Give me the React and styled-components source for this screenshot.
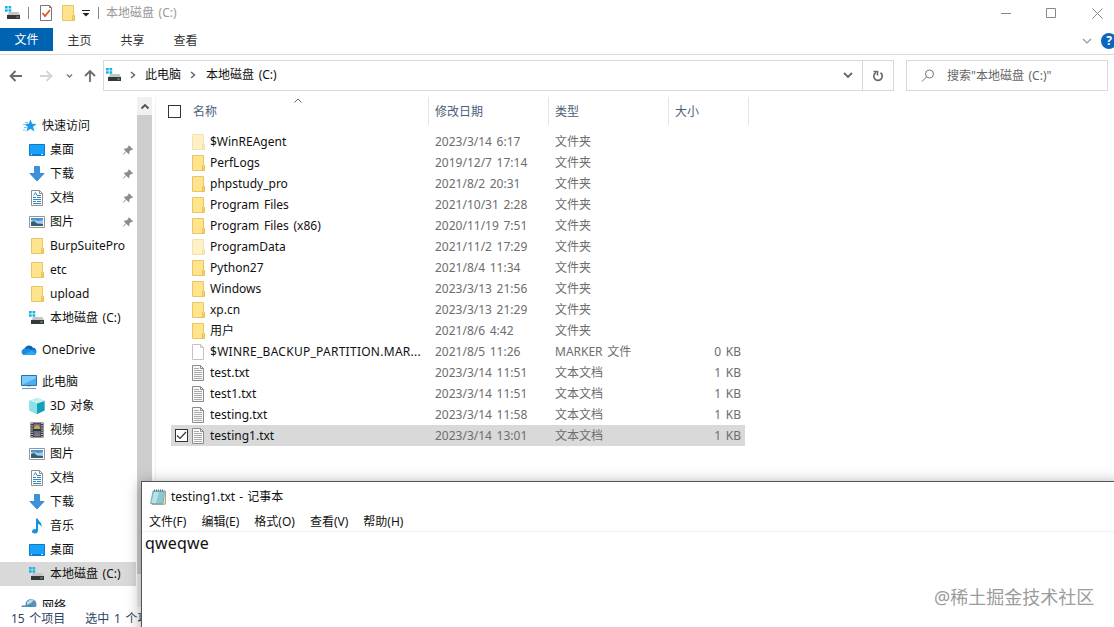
import React from 'react';
import styled, { createGlobalStyle } from "styled-components";

const sideItems = [
  { icon: 'star', text: '快速访问', top: true },
  { icon: 'desktop', text: '桌面', pin: true },
  { icon: 'down', text: '下载', pin: true },
  { icon: 'doc', text: '文档', pin: true },
  { icon: 'pic', text: '图片', pin: true },
  { icon: 'folder', text: 'BurpSuitePro' },
  { icon: 'folder', text: 'etc' },
  { icon: 'folder', text: 'upload' },
  { icon: 'drive', text: '本地磁盘 (C:)' },
  { icon: 'cloud', text: 'OneDrive', top: true, gap: true },
  { icon: 'pc', text: '此电脑', top: true, gap: true },
  { icon: 'cube', text: '3D 对象' },
  { icon: 'film', text: '视频' },
  { icon: 'pic', text: '图片' },
  { icon: 'doc', text: '文档' },
  { icon: 'down', text: '下载' },
  { icon: 'music', text: '音乐' },
  { icon: 'desktop', text: '桌面' },
  { icon: 'drive', text: '本地磁盘 (C:)', active: true },
  { icon: 'net', text: '网络', top: true, gap: true },
];

const files = [
  { icon: 'folder', faded: true, name: '$WinREAgent', date: '2023/3/14 6:17', type: '文件夹' },
  { icon: 'folder', name: 'PerfLogs', date: '2019/12/7 17:14', type: '文件夹' },
  { icon: 'folder', name: 'phpstudy_pro', date: '2021/8/2 20:31', type: '文件夹' },
  { icon: 'folder', name: 'Program Files', date: '2021/10/31 2:28', type: '文件夹' },
  { icon: 'folder', name: 'Program Files (x86)', date: '2020/11/19 7:51', type: '文件夹' },
  { icon: 'folder', faded: true, name: 'ProgramData', date: '2021/11/2 17:29', type: '文件夹' },
  { icon: 'folder', name: 'Python27', date: '2021/8/4 11:34', type: '文件夹' },
  { icon: 'folder', name: 'Windows', date: '2023/3/13 21:56', type: '文件夹' },
  { icon: 'folder', name: 'xp.cn', date: '2023/3/13 21:29', type: '文件夹' },
  { icon: 'folder', name: '用户', date: '2021/8/6 4:42', type: '文件夹' },
  { icon: 'blank', faded: true, wide: true, name: '$WINRE_BACKUP_PARTITION.MAR...', date: '2021/8/5 11:26', type: 'MARKER 文件', size: '0 KB' },
  { icon: 'text', name: 'test.txt', date: '2023/3/14 11:51', type: '文本文档', size: '1 KB' },
  { icon: 'text', name: 'test1.txt', date: '2023/3/14 11:51', type: '文本文档', size: '1 KB' },
  { icon: 'text', name: 'testing.txt', date: '2023/3/14 11:58', type: '文本文档', size: '1 KB' },
  { icon: 'text', name: 'testing1.txt', date: '2023/3/14 13:01', type: '文本文档', size: '1 KB', checked: true },
];

const shapes = {
  folder: (
    <>
      <path d="M2.500.5h11v9l1 1v5h-12z" fill="#ffe38d" stroke="#e9c665" />
      <path d="M12.500 15V10.500l1-1 1 1V15z" fill="#f9d466" stroke="#e6bd4c" strokeWidth=".8" />
    </>
  ),
  drive: (
    <>
      <path d="M0 1h2.700v2.500H0zM3.500 1h2.700v2.500H3.500zM0 4.300h2.700v2.500H0zM3.500 4.300h2.700v2.500H3.500z" fill="#19b2e8" />
      <path d="M4 7h9.500l1.500 3H2.500z" fill="#c4c6c8" />
      <path d="M2 10h13v4H2z" fill="#34383b" />
      <path d="M11.500 11.500h2v1h-2z" fill="#7ed6b1" />
    </>
  ),
  star: (
    <>
      <path d="M9.500 1.500l1.600 4.300 4.400.1-3.500 2.800 1.500 4.700-4.100-2.600-4 2.700 1.300-4.700-3.600-2.900 4.600-.1z" fill="#1d9bea" />
      <path d="M4 4.500h3M2 6.500h3M3 9.500h3M2 12h2.500" stroke="#7cc7f5" />
    </>
  ),
  desktop: (
    <>
      <path d="M.5 2.500h15v11H.5z" fill="#1aa1fa" stroke="#0e7bc9" />
      <path d="M1 12.500h14" stroke="#077ccc" />
      <path d="M2 12.500h1M12 12.500h2" stroke="#d5efff" />
    </>
  ),
  down: <path d="M5.500 0.500h5v7h4.500l-7 7.500L1 7.500h4.500z" fill="#3a92dc" stroke="#297dc4" strokeWidth=".8" />,
  doc: (
    <>
      <path d="M2.500.5h8l3 3v12h-11z" fill="#fcfdff" stroke="#8d9092" />
      <path d="M10.500.5v3h3" fill="none" stroke="#8d9092" />
      <path d="M4.500 5.500l2-3 1.500 3M8 5.500h4M4 7.500h3M8 7.500h4M4 9.500h8M4 11.500h3M8 11.500h4M4 13.500h8" fill="none" stroke="#3689bf" />
    </>
  ),
  pic: (
    <>
      <path d="M.5 2.500h15v11H.5z" fill="#fff" stroke="#939698" />
      <path d="M2 4h12v8H2z" fill="#9bcdf1" />
      <path d="M2 4h12v2l-4 1-8-1z" fill="#4e93d3" />
      <path d="M2 8l3-1 3 2.500 6 .5v2H2z" fill="#385e68" />
    </>
  ),
  cloud: (
    <>
      <path d="M3.500 13A3.400 3.400 0 0 1 3.500 6.500 4.800 4.800 0 0 1 12 5.700 3.800 3.800 0 0 1 13 13z" fill="#0c62b8" />
      <path d="M4 13a3 3 0 0 1-2-5.500l5-1.200 3 1.400 3-.5a3 3 0 0 1 0 5.800z" fill="#168edf" />
      <path d="M3 13l7-4.500 5 3q-.6 1.500-2 1.500z" fill="#30a9ee" />
    </>
  ),
  pc: (
    <>
      <path d="M.5 1.500h15v10H.5z" fill="#49aef4" stroke="#356f9f" />
      <path d="M1 2h14v2L1 11z" fill="#7acbff" />
      <path d="M6 12h4v1H6z" fill="#c5d4df" />
      <path d="M1 14.500h14" stroke="#6a98bb" />
    </>
  ),
  cube: (
    <>
      <path d="M8 0l7.500 3v9.500L8 16 .5 12.500V3z" fill="#49c3d4" />
      <path d="M.5 3L8 5.500V16L.5 12.500z" fill="#8be1e9" />
      <path d="M8 5.500L15.500 3v9.500L8 16z" fill="#159eb8" />
      <path d="M.5 3L8 0l7.500 3L8 5.500z" fill="#c4f2f4" />
    </>
  ),
  film: (
    <>
      <path d="M1.500.5h13v15h-13z" fill="#343638" />
      <path d="M4.500 1.500h7V7h-7z" fill="#78649d" />
      <path d="M4.500 9h7v5.500h-7z" fill="#4c73b0" />
      <path d="M5 5q3-4 6 0v2H5z" fill="#c3a549" />
      <path d="M5 13l3-2 3 2v1H5z" fill="#ab743a" />
      <path d="M3 1v14M13 1v14" stroke="#e9eaeb" strokeWidth="1.400" strokeDasharray="1 1.200" />
    </>
  ),
  music: <path d="M7 .5h1.800c.4 3 5 4 3.500 8.500-.5-2-1.800-2.700-3.300-3.100V13c0 3-6 3.600-6 .6 0-2 2-3 4-2.400z" fill="#1592e6" />,
  net: (
    <>
      <circle cx="10" cy="6.500" r="5.500" fill="#5692bd" />
      <path d="M6 4q4-4 7-2-2 3-7 5z" fill="#b8d9ea" />
      <path d="M1 8h9v5H1z" fill="#67b5e6" stroke="#3e789d" />
      <path d="M0 14.500h10" stroke="#94acbd" />
    </>
  ),
  blank: (
    <>
      <path d="M2.500.5h8l3 3v12h-11z" fill="#fff" stroke="#8b8b8b" />
      <path d="M10.500.5v3h3" fill="none" stroke="#8b8b8b" />
    </>
  ),
  text: (
    <>
      <path d="M2.500.5h8l3 3v12h-11z" fill="#f8f8f8" stroke="#8b8b8b" />
      <path d="M10.500.5v3h3" fill="none" stroke="#8b8b8b" />
      <path d="M4 3.500h5M4 5.500h8M4 7.500h8M4 9.500h8M4 11.500h8M4 13.500h8" stroke="#aaa" />
    </>
  ),
  check: (
    <>
      <path d="M2.500.5h9l2 2v13h-11z" fill="#fff" stroke="#777" />
      <path d="M11.500.5v2h2" fill="none" stroke="#777" />
      <path d="M4.500 8l2.500 3 5-6" fill="none" stroke="#e05a2b" strokeWidth="1.800" />
    </>
  ),
  pin: <path d="M8.500 3l4.500 4.500-1.200.4-.8-.2-2 2 .1 1.800-.9.9-2.500-2.500L2.500 13l-.5-.5 3.100-3.200L3 7.200l.9-.9 1.900.1 2-2-.2-.8z" fill="#858e96" />,
  notepad: (
    <>
      <path d="M3.500 2.500l12-.5v13l-2 .5H2z" fill="#e8dfc2" stroke="#9b9377" strokeWidth=".8" />
      <path d="M3 2h11.500L13 14.500H.5z" fill="#8ac8d3" stroke="#62a1af" strokeWidth=".7" />
      <path d="M4 3h5L6 14H1.500z" fill="#b8e2e6" />
      <path d="M4 1.500h10" stroke="#596e76" strokeWidth="2" strokeDasharray="1 1" />
    </>
  ),
};

const Icon = ({ name, faded }) => (
  <Glyph viewBox="0 0 16 16" $faded={faded}>{shapes[name]}</Glyph>
);

const Chevron = ({ d, color = '#666', w = 1.5 }) => (
  <Small viewBox="0 0 10 10">
    <path d={d} fill="none" stroke={color} strokeWidth={w} />
  </Small>
);

const RIGHT = 'M3 2l3.500 3L3 8';
const DOWN = 'M1 3l4 4 4-4';
const UP = 'M1.500 6.500L5 3l3.500 3.500';

function App() {
  return (
    <Screen>
      <Global />
      <TitleBar>
        <Icon name="drive" />
        <Bar />
        <Icon name="check" />
        <Icon name="folder" />
        <Small viewBox="0 0 10 10">
          <path d="M1 2.500h8" stroke="#222" />
          <path d="M1.500 5h7L5 8.500z" fill="#222" />
        </Small>
        <Bar />
        <Caption>本地磁盘 (C:)</Caption>
        <WinButtons viewBox="0 0 108 12">
          <path d="M5 6.500h10M50.500 1.500h9v9h-9zM96.500 1.500l10 10M106.500 1.500l-10 10" fill="none" stroke="#888" />
        </WinButtons>
      </TitleBar>

      <Tabs>
        <FileTab>文件</FileTab>
        <Tab>主页</Tab>
        <Tab>共享</Tab>
        <Tab>查看</Tab>
        <TabEnd>
          <Chevron d={DOWN} color="#999" w={1.2} />
          <Help>?</Help>
        </TabEnd>
      </Tabs>

      <NavBar>
        <NavArrows viewBox="0 0 98 20">
          <path d="M22 10H11M15.500 5L10.500 10l5 5" fill="none" stroke="#6b6b6b" strokeWidth="1.800" />
          <path d="M40 10h11M46.500 5l5 5-5 5" fill="none" stroke="#d4d4d4" strokeWidth="1.800" />
          <path d="M67 8.500l2.500 2.500L72 8.500" fill="none" stroke="#7a7a7a" strokeWidth="1.500" />
          <path d="M90 16V5M85 10l5-5 5 5" fill="none" stroke="#6b6b6b" strokeWidth="1.800" />
        </NavArrows>
        <Address>
          <Icon name="drive" />
          <Chevron d={RIGHT} />
          <span>此电脑</span>
          <Chevron d={RIGHT} />
          <span>本地磁盘 (C:)</span>
          <DropArrow><Chevron d={DOWN} w={1.8} /></DropArrow>
          <Refresh>
            <svg width="12" height="12" viewBox="0 0 12 12">
              <path d="M8.500 2.800A4.200 4.200 0 1 1 4 2.500" fill="none" stroke="#6b6b6b" strokeWidth="1.700" />
              <path d="M1.500 1.500h4V5.500" fill="none" stroke="#6b6b6b" strokeWidth="1.600" />
            </svg>
          </Refresh>
        </Address>
        <Search>
          <svg width="14" height="14" viewBox="0 0 14 14">
            <circle cx="8.500" cy="5" r="4" fill="none" stroke="#777" />
            <path d="M5.500 8L1 12.500" stroke="#777" />
          </svg>
          <span>搜索"本地磁盘 (C:)"</span>
        </Search>
      </NavBar>

      <Body>
        <Sidebar>
          {sideItems.map((item, i) => (
            <SideItem key={i} $top={item.top} $gap={item.gap} $active={item.active}>
              <Icon name={item.icon} />
              <Label>{item.text}</Label>
              {item.pin && <Icon name="pin" />}
            </SideItem>
          ))}
        </Sidebar>
        <Scroll>
          <ScrollButton><Chevron d={UP} color="#505050" w={1.8} /></ScrollButton>
          <Thumb />
        </Scroll>
        <Main>
          <HeaderRow>
            <NameHead><Check />名称</NameHead>
            <Head>修改日期</Head>
            <Head>类型</Head>
            <Head>大小</Head>
            <SortMark><Chevron d={UP} w={1} /></SortMark>
          </HeaderRow>
          {files.map((file) => (
            <Row key={file.name} $checked={file.checked}>
              <Name>
                {file.checked && (
                  <Check>
                    <svg width="11" height="11" viewBox="0 0 11 11">
                      <path d="M1 5.500l3 3 6-6.500" fill="none" stroke="#333" strokeWidth="1.200" />
                    </svg>
                  </Check>
                )}
                <Icon name={file.icon} faded={file.faded} />
                <FileName $wide={file.wide}>{file.name}</FileName>
              </Name>
              <Cell>{file.date}</Cell>
              <Cell>{file.type}</Cell>
              <SizeCell>{file.size}</SizeCell>
            </Row>
          ))}
        </Main>
      </Body>

      <StatusBar>
        <span>15 个项目</span>
        <span>选中 1 个项目</span>
      </StatusBar>

      <Notepad>
        <NoteTitle><Icon name="notepad" />testing1.txt - 记事本</NoteTitle>
        <NoteMenu>
          <span>文件(F)</span>
          <span>编辑(E)</span>
          <span>格式(O)</span>
          <span>查看(V)</span>
          <span>帮助(H)</span>
        </NoteMenu>
        <NoteText>qweqwe</NoteText>
      </Notepad>
      <Watermark>@稀土掘金技术社区</Watermark>
    </Screen>
  );
}

const Global = createGlobalStyle`
  body {
    margin: 0;
    overflow: hidden;
  }
  * {
    box-sizing: border-box;
  }
`

const Screen = styled.div`
  position: relative;
  display: flex;
  flex-direction: column;
  width: 1114px;
  height: 627px;
  overflow: hidden;
  background: #fff;
  color: #111;
  font: 12px/16px "Noto Sans", "Noto Sans CJK SC", sans-serif;
  word-spacing: 1.5px;
  white-space: nowrap;
`

const Glyph = styled.svg`
  flex: none;
  width: 16px;
  height: 16px;
  opacity: ${(p) => (p.$faded ? 0.5 : 1)};
`

const Small = styled.svg`
  flex: none;
  width: 10px;
  height: 10px;
`

const TitleBar = styled.div`
  display: flex;
  align-items: center;
  height: 28px;
  padding: 0 6px 2px 5px;
  > svg:nth-child(3) {
    margin-left: 9px;
  }
  > svg:nth-child(4) {
    margin: 0 5px 0 6px;
  }
`

const Bar = styled.div`
  width: 1px;
  height: 12px;
  margin-left: 7px;
  background: #888;
`

const Caption = styled.div`
  margin-left: 7px;
  color: #999;
`

const WinButtons = styled.svg`
  width: 108px;
  height: 12px;
  margin-left: auto;
  margin-right: 4px;
  margin-bottom: 1px;
`

const Tabs = styled.div`
  display: flex;
  height: 27px;
  padding-bottom: 3px;
  border-bottom: 1px solid #dadada;
  line-height: 25px;
`

const Tab = styled.div`
  width: 53px;
  text-align: center;
  color: #333;
`

const FileTab = styled(Tab)`
  background: #0063b1;
  color: #fff;
  line-height: 23px;
`

const TabEnd = styled.div`
  display: flex;
  align-items: center;
  gap: 9px;
  width: 32px;
  height: 25px;
  margin-left: auto;
`

const Help = styled.div`
  flex: none;
  width: 16px;
  height: 16px;
  border-radius: 50%;
  background: #0a67bd;
  color: #fff;
  font-weight: bold;
  line-height: 16px;
  text-align: center;
`

const NavBar = styled.div`
  display: flex;
  height: 42px;
  padding: 5px 6px 6px 0;
`

const NavArrows = styled.svg`
  width: 98px;
  height: 20px;
  margin: 6px 5px 0 0;
`

const Address = styled.div`
  display: flex;
  align-items: center;
  width: 791px;
  height: 31px;
  padding: 0 0 1px 2px;
  border: 1px solid #d9d9d9;
  > svg:nth-child(2) {
    margin: 0 7px 0 6px;
  }
  > svg:nth-child(4) {
    margin: 0 8px 0 7px;
  }
`

const DropArrow = styled.div`
  display: flex;
  margin-left: auto;
  margin-right: 9px;
`

const Refresh = styled.div`
  display: flex;
  align-items: center;
  justify-content: center;
  width: 31px;
  height: 29px;
  margin-bottom: -1px;
  border-left: 1px solid #d9d9d9;
`

const Search = styled.div`
  display: flex;
  align-items: center;
  gap: 12px;
  width: 202px;
  height: 31px;
  margin-left: 12px;
  padding-left: 14px;
  border: 1px solid #d9d9d9;
  color: #666;
`

const Body = styled.div`
  display: flex;
  height: 510px;
  overflow: hidden;
`

const Sidebar = styled.div`
  width: 137px;
  padding-top: 17px;
`

const SideItem = styled.div`
  display: flex;
  align-items: center;
  gap: 5px;
  width: 136px;
  height: 24px;
  margin-top: ${(p) => (p.$gap ? 8 : 0)}px;
  padding: 0 0 1px ${(p) => (p.$top ? 21 : 29)}px;
  background: ${(p) => (p.$active ? '#d9d9d9' : 'none')};
  > svg:last-child {
    width: 15px;
    margin-left: auto;
  }
`

const Label = styled.span`
  flex: none;
  line-height: 18px;
`

const Scroll = styled.div`
  width: 15px;
  height: 510px;
  padding-top: 1px;
  background: #f0f0f0;
`

const ScrollButton = styled.div`
  display: flex;
  align-items: center;
  justify-content: center;
  height: 17px;
`

const Thumb = styled.div`
  height: 459px;
  background: #cdcdcd;
`

const Main = styled.div`
  flex: 1;
  margin-left: 3px;
  padding-left: 15px;
  border-left: 1px solid #f3f3f3;
`

const HeaderRow = styled.div`
  position: relative;
  display: flex;
  width: 578px;
  height: 28px;
  margin-bottom: 6px;
  color: #4c607a;
  line-height: 29px;
`

const NameHead = styled.div`
  display: flex;
  align-items: center;
  gap: 12px;
  width: 258px;
  border-right: 1px solid #e5e5e5;
  > div {
    margin-left: -3px;
  }
`

const Head = styled.div`
  width: 120px;
  padding-left: 6px;
  border-right: 1px solid #e5e5e5;
  &:nth-child(4) {
    width: 80px;
  }
`

const SortMark = styled.div`
  position: absolute;
  left: 122px;
  top: -1px;
  line-height: 0;
`

const Check = styled.div`
  display: flex;
  align-items: center;
  justify-content: center;
  flex: none;
  width: 13px;
  height: 13px;
  border: 1px solid #333;
  background: #fff;
`

const Row = styled.div`
  display: flex;
  width: 574px;
  height: 21px;
  background: ${(p) => (p.$checked ? '#d9d9d9' : 'none')};
  line-height: 21px;
`

const Name = styled.div`
  display: flex;
  align-items: center;
  width: 264px;
  padding-left: 4px;
  > svg {
    margin: 0 4px 0 15px;
  }
  > div + svg {
    margin-left: 2px;
  }
`

const FileName = styled.span`
  letter-spacing: ${(p) => (p.$wide ? '0.27px' : 'normal')};
`

const Cell = styled.div`
  width: 120px;
  color: #6d6d6d;
`

const SizeCell = styled(Cell)`
  width: 66px;
  text-align: right;
`

const StatusBar = styled.div`
  display: flex;
  gap: 20px;
  height: 20px;
  padding-left: 11px;
  color: #2c4262;
  line-height: 24px;
`

const Notepad = styled.div`
  position: absolute;
  left: 141px;
  top: 481px;
  width: 980px;
  height: 160px;
  border: 1px solid #555;
  background: #fff;
  box-shadow: 0 2px 14px rgba(0, 0, 0, 0.35);
`

const NoteTitle = styled.div`
  display: flex;
  align-items: center;
  gap: 5px;
  height: 29px;
  padding-left: 8px;
  word-spacing: 1px;
`

const NoteMenu = styled.div`
  display: flex;
  gap: 15px;
  height: 21px;
  padding-left: 7px;
  border-bottom: 1px solid #f0f0f0;
  line-height: 21px;
`

const NoteText = styled.div`
  padding-left: 3px;
  font-size: 16px;
  line-height: 22px;
  letter-spacing: 0.2px;
`

const Watermark = styled.div`
  position: absolute;
  left: 934px;
  top: 585px;
  color: #9c9c9c;
  font-size: 18px;
  line-height: 24px;
`

export default App;
